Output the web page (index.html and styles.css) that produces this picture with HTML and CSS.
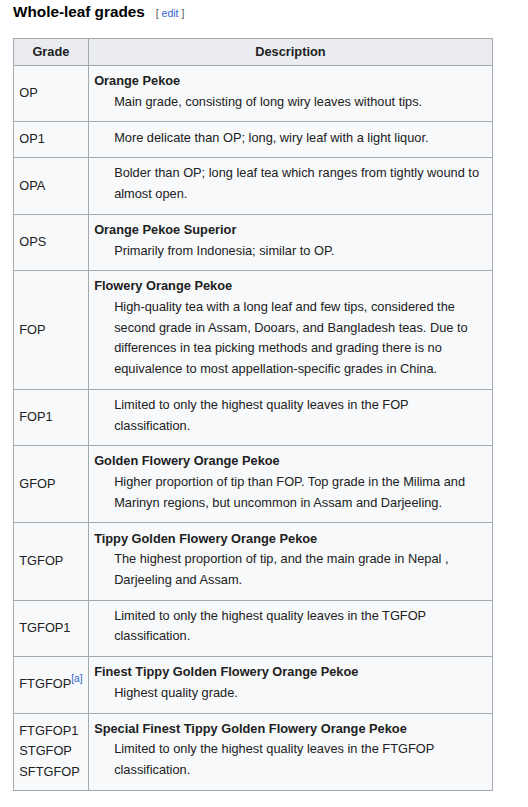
FILE: index.html
```html
<!DOCTYPE html>
<html>
<head>
<meta charset="utf-8">
<link rel="stylesheet" href="styles.css">
</head>
<body>
<div class="section-head">
  <h3 class="title">Whole-leaf grades</h3>
  <span class="editsection"><span class="br">[</span> <a href="#">edit</a> <span class="br">]</span></span>
</div>
<table class="wikitable">
  <thead>
    <tr><th class="c-grade">Grade</th><th>Description</th></tr>
  </thead>
  <tbody>
    <tr><td>OP</td><td><dl><dt>Orange Pekoe</dt><dd>Main grade, consisting of long wiry leaves without tips.</dd></dl></td></tr>
    <tr><td>OP1</td><td><dl><dd>More delicate than OP; long, wiry leaf with a light liquor.</dd></dl></td></tr>
    <tr><td>OPA</td><td><dl><dd>Bolder than OP; long leaf tea which ranges from tightly wound to almost open.</dd></dl></td></tr>
    <tr><td>OPS</td><td><dl><dt>Orange Pekoe Superior</dt><dd>Primarily from Indonesia; similar to OP.</dd></dl></td></tr>
    <tr><td>FOP</td><td><dl><dt>Flowery Orange Pekoe</dt><dd>High-quality tea with a long leaf and few tips, considered the second grade in Assam, Dooars, and Bangladesh teas. Due to differences in tea picking methods and grading there is no equivalence to most appellation-specific grades in China.</dd></dl></td></tr>
    <tr><td>FOP1</td><td><dl><dd>Limited to only the highest quality leaves in the FOP classification.</dd></dl></td></tr>
    <tr><td>GFOP</td><td><dl><dt>Golden Flowery Orange Pekoe</dt><dd>Higher proportion of tip than FOP. Top grade in the Milima and Marinyn regions, but uncommon in Assam and Darjeeling.</dd></dl></td></tr>
    <tr><td>TGFOP</td><td><dl><dt>Tippy Golden Flowery Orange Pekoe</dt><dd>The highest proportion of tip, and the main grade in Nepal , Darjeeling and Assam.</dd></dl></td></tr>
    <tr><td>TGFOP1</td><td><dl><dd>Limited to only the highest quality leaves in the TGFOP classification.</dd></dl></td></tr>
    <tr><td>FTGFOP<sup class="ref"><a href="#">[a]</a></sup></td><td><dl><dt>Finest Tippy Golden Flowery Orange Pekoe</dt><dd>Highest quality grade.</dd></dl></td></tr>
    <tr><td>FTGFOP1<br>STGFOP<br>SFTGFOP</td><td><dl><dt>Special Finest Tippy Golden Flowery Orange Pekoe</dt><dd>Limited to only the highest quality leaves in the FTGFOP classification.</dd></dl></td></tr>
  </tbody>
</table>
</body>
</html>
```
FILE: styles.css
```css
html, body {
  margin: 0;
  padding: 0;
  background: #ffffff;
}
body {
  font-family: "Liberation Sans", Arial, sans-serif;
  color: #202122;
  padding: 0 13px;
}
.section-head {
  display: flex;
  align-items: baseline;
  height: 38px;
}
.title {
  margin: 0;
  padding-top: 1px;
  font-size: 15.3px;
  line-height: 22px;
  font-weight: bold;
  color: #000;
}
.editsection {
  margin-left: 11px;
  font-size: 10.5px;
  color: #54595d;
}
.editsection a {
  color: #3366cc;
  text-decoration: none;
}
.wikitable {
  border-collapse: collapse;
  width: 480px;
  background: #f8f9fa;
  color: #202122;
  font-size: 12.8px;
  line-height: 20.7px;
  border: 1px solid #a2a9b1;
}
.wikitable th,
.wikitable td {
  border: 1px solid #a2a9b1;
  padding: 2.6px 5.3px;
  text-align: left;
  vertical-align: middle;
}
.wikitable th {
  background: #eaecf0;
  text-align: center;
  font-weight: bold;
}
.c-grade {
  width: 63px;
}
.wikitable dl {
  margin: 2.6px 0 6.3px 0;
}
.wikitable dt {
  font-weight: bold;
}
.wikitable dd {
  margin: 0 0 0 20px;
}
.ref {
  font-size: 10.2px;
  line-height: 1;
  vertical-align: 6px;
}
.ref a {
  color: #3366cc;
  text-decoration: none;
}
```
